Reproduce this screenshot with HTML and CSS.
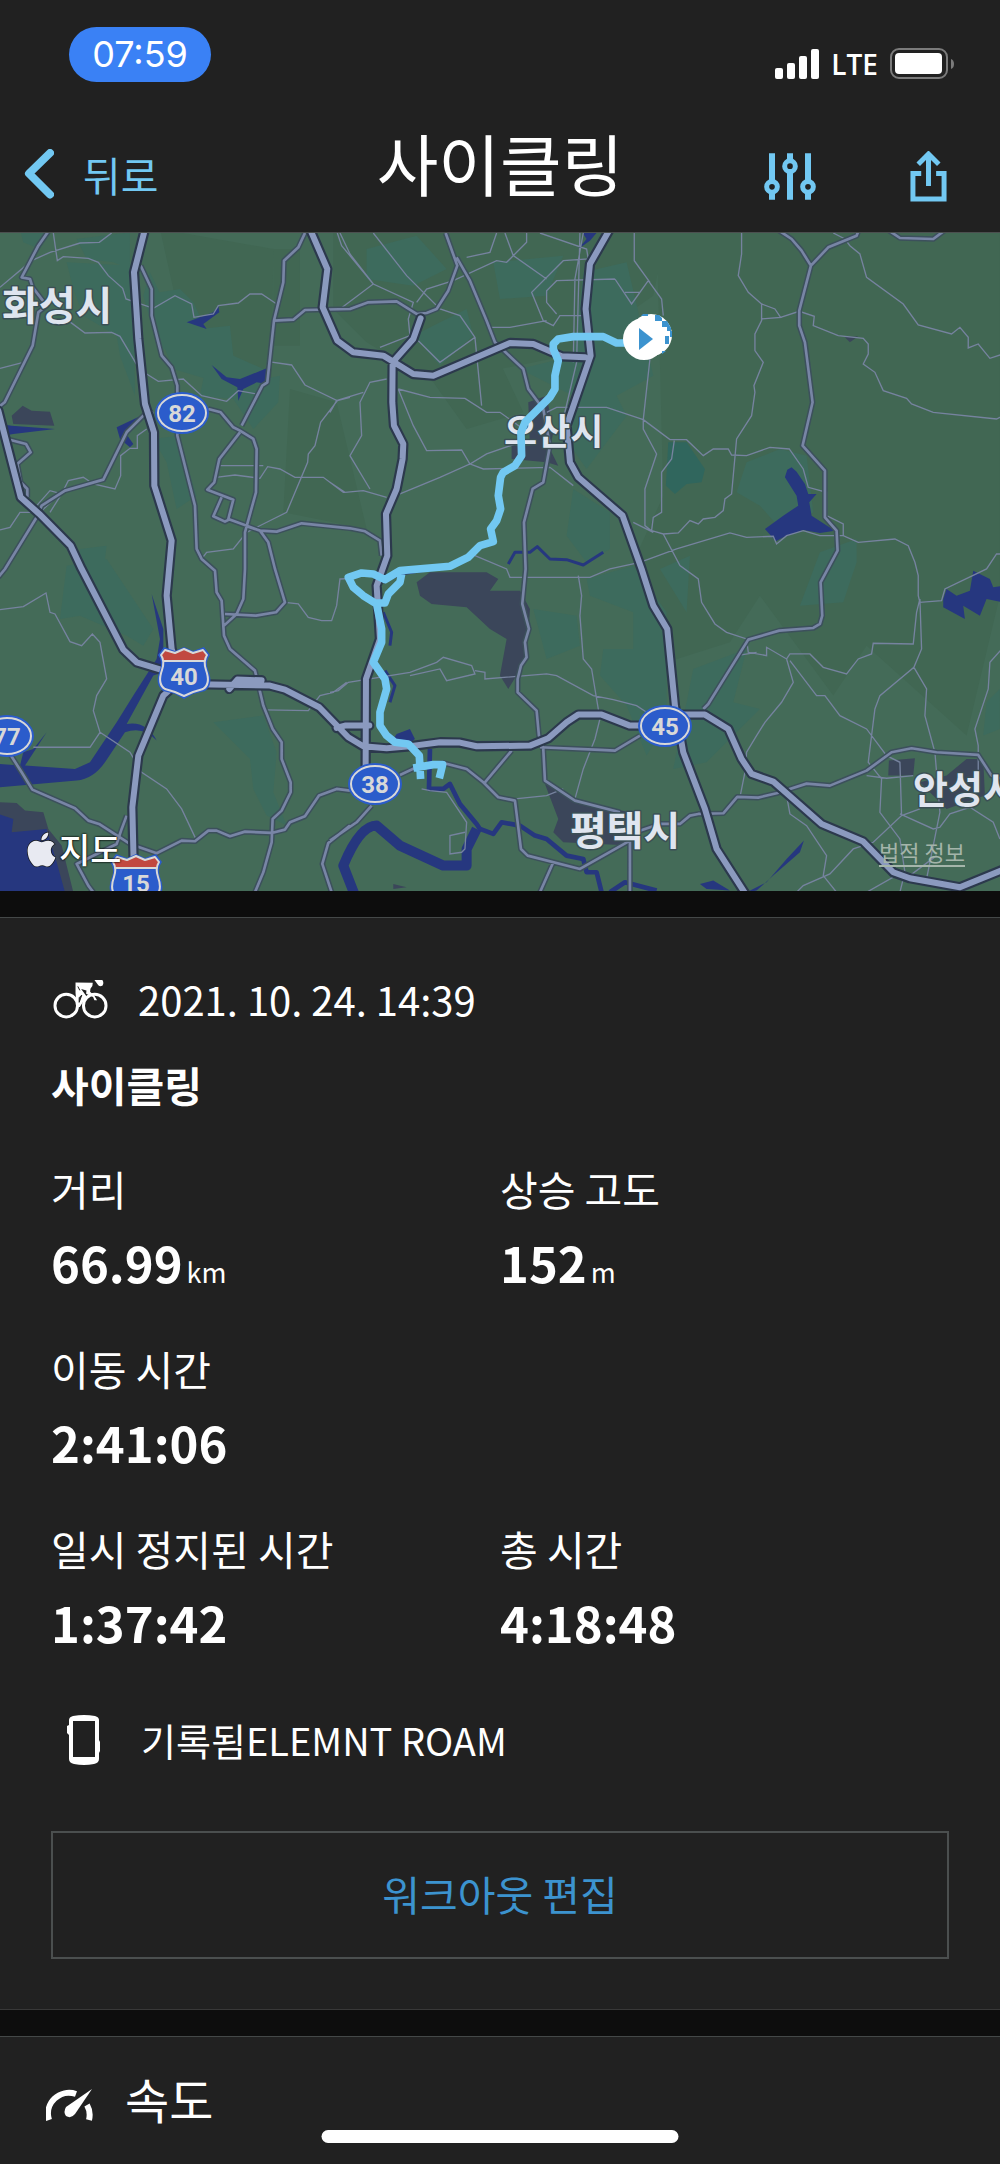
FILE: index.html
```html
<!DOCTYPE html>
<html lang="ko">
<head>
    <meta charset="utf-8">
    <meta name="viewport" content="width=device-width, initial-scale=1">
    <title>사이클링</title>
    <link rel="stylesheet" href="styles.css">
</head>
<body>
    <header class="header">
        <div class="status-bar">
            <span class="clock">07:59</span>
            <div class="status-icons">
                <svg class="signal" viewBox="0 0 44 30" aria-hidden="true">
                    <rect x="0" y="19" width="8" height="11" rx="2"/>
                    <rect x="12" y="14" width="8" height="16" rx="2"/>
                    <rect x="24" y="7" width="8" height="23" rx="2"/>
                    <rect x="36" y="0" width="8" height="30" rx="2"/>
                </svg>
                <span class="network">LTE</span>
                <svg class="battery" viewBox="0 0 64 32" aria-hidden="true">
                    <rect x="1" y="1" width="56" height="29" rx="8" fill="none" stroke="#7b7b7b" stroke-width="2"/>
                    <rect x="5" y="5" width="47" height="21" rx="4" fill="#fff"/>
                    <path d="M61 11q3 1 3 5t-3 5z" fill="#7b7b7b"/>
                </svg>
            </div>
        </div>
        <nav class="nav">
            <button class="back" type="button">
                <svg class="chevron" viewBox="0 0 30 50" aria-hidden="true">
                    <path d="M26 4L5 24.500L26 45.500" fill="none" stroke="currentColor" stroke-width="8" stroke-linecap="round" stroke-linejoin="round"/>
                </svg>
                <span>뒤로</span>
            </button>
            <h1>사이클링</h1>
            <div class="actions">
                <button class="icon-button" type="button" aria-label="설정">
                    <svg class="sliders" viewBox="0 0 156 140" fill="none" stroke="currentColor" aria-hidden="true">
                        <path d="M24 0V82M24 122V140M78 0V20M78 58V140M132 0V82M132 122V140" stroke-width="18"/>
                        <g stroke-width="15">
                            <circle cx="24" cy="101" r="16"/>
                            <circle cx="78" cy="39" r="16"/>
                            <circle cx="132" cy="101" r="16"/>
                        </g>
                    </svg>
                </button>
                <button class="icon-button" type="button" aria-label="공유">
                    <svg class="share" viewBox="0 0 110 154" fill="none" stroke="currentColor" stroke-width="15" aria-hidden="true">
                        <path d="M33 68H8V145H102V68H78M55 106V14M24 40L55 9L86 40"/>
                    </svg>
                </button>
            </div>
        </nav>
    </header>

    <main>
        <section class="map">
            <svg class="map-canvas" viewBox="0 0 1000 658" role="img" aria-label="지도">
                <defs>
                    <g id="oval">
                        <ellipse rx="27" ry="21" fill="#2b5ccb"/>
                        <ellipse rx="24" ry="18" fill="none" stroke="#d8d8d8" stroke-width="2"/>
                    </g>
                    <g id="shield" stroke-linejoin="round">
                        <path d="M0-26L-9-22L-20-26L-26-18Q-21-12-24-3Q-30 11-21 18L-9 21L0 26L9 21L21 18Q30 11 24-3Q21-12 26-18L20-26L9-22Z" fill="#2b5ccb"/>
                        <path d="M-22-12Q-21-16-23-18L-19-23L-9-20L0-24L9-20L19-23L23-18Q21-16 22-12Z" fill="#c14840"/>
                        <path d="M-21-12H21" stroke="#d8d8d8" stroke-width="2"/>
                        <path d="M0-24L-9-20L-19-23L-23-18Q-19-12-22-3Q-27 11-19 16L-9 19L0 23L9 19L19 16Q27 11 22-3Q19-12 23-18L19-23L9-20Z" fill="none" stroke="#d8d8d8" stroke-width="2"/>
                    </g>
                    <path id="highways" d="M435 0L402 130L415 330L435 525L462 610L463 770L515 935L500 1100L515 1260L545 1350L490 1400L415 1580L397 1735L403 1986
                        M-5 545L62 805L118 855L212 950L245 1020L370 1262L410 1300L475 1320L550 1345
                        M930 0L982 120L968 235L1012 335L1060 370L1150 380L1240 435L1300 440L1530 342L1600 345L1685 382L1755 385
                        M1262 268L1240 330L1178 400L1177 520L1182 590L1210 645L1208 690L1190 780L1158 855L1162 980L1130 1070L1140 1230L1098 1350L1097 1620
                        M1830 0L1770 105L1757 240L1772 380L1700 590L1710 700L1735 745L1868 860L1925 1020L1960 1130L2002 1200L2025 1430L2050 1570L2115 1740L2150 1860L2240 2000
                        M550 1365L810 1370L855 1382L958 1435L1045 1525L1090 1552L1160 1558L1220 1553L1320 1540L1380 1541L1430 1552L1590 1550L1645 1528L1700 1480L1735 1457L1805 1457L1890 1490L2000 1490L2040 1457L2115 1457L2185 1500L2225 1590L2255 1635L2320 1658L2465 1785L2590 1838L2680 1930L2730 1948L2880 1975L3010 1922
                        M1010 1497L1035 1490H1108M688 1380L712 1352L785 1354"/>
                    <path id="roads" d="M150 0L115 50L65 145L90 150L98 175L140 230L115 250L98 350L14 520L-5 535
                        M422 110L455 180V260L485 380L515 415L532 470V620L585 830L590 960L605 990L645 1025L650 1090L665 1115L672 1220L690 1260L765 1325L790 1430L818 1500L845 1540V1590L872 1660V1690L845 1745L818 1770L815 1840L790 1930L765 1990
                        M915 12L895 55L852 95L850 160L822 275L802 460L787 470L725 590
                        M822 275L880 272L915 243L1050 240L1105 220L1190 217L1250 255L1280 252L1310 240L1345 185L1372 110L1337 12M1370 85L1410 155L1460 275L1485 340L1570 420L1585 480L1630 540L1650 650L1630 760L1598 780L1572 880L1577 1020L1567 1125L1587 1200L1575 1240L1580 1285L1563 1310L1553 1350V1390L1610 1445L1617 1520L1630 1560L1635 1655L1725 1715L1860 1750
                        M460 550L430 560L380 610L310 752L195 785L125 830L110 865L15 1020L-5 1045
                        M625 540L662 550L700 595L720 605L760 630L770 660L768 790L735 910V1020L730 1110L710 1155L672 1190
                        M720 610L658 690L643 760L622 782L700 812L685 870L780 905L830 908L905 883L1050 898L1095 907L1140 935L1145 980
                        M665 805L640 862L675 878L690 870M735 890L780 905L805 940L825 1020L855 1120L828 1150L768 1160L675 1155
                        M20 630L78 645L92 670L52 705L62 760L82 780V805
                        M2330 0L2375 30L2405 65L2433 110L2398 245V290L2415 340L2438 520L2408 650L2475 725V865L2510 905L2513 965L2462 1060L2467 1160L2460 1185L2440 1197L2338 1205L2245 1232L2125 1425L2110 1440M2433 110L2485 55L2570 20L2578 0M2660 0L2700 27L2800 30L2840 0
                        M30 1575L65 1630L97 1682L225 1738L265 1775L297 1785L390 1845L470 1873L545 1835L585 1837L625 1805H650L690 1822L735 1808L815 1812L855 1802L870 1780L915 1762L957 1700L1010 1680L1050 1685
                        M380 1760L365 1800L350 1845L230 1905L265 1970L280 1990
                        M990 1835L1070 1780L1115 1730M1200 1638L1260 1610L1330 1602L1400 1620L1450 1660L1495 1705L1545 1715L1563 1860L1583 1880L1740 1920L1890 1835V1990M1535 1565L1455 1660M1660 1900L1620 1990M1620 1555L1800 1563L1845 1565L1920 1520
                        M1890 1815L1980 1785L2040 1785L2070 1760L2095 1755L2170 1753L2212 1704L2275 1706L2330 1693L2420 1664L2490 1670L2600 1625L2675 1570L2735 1558L2810 1570L2935 1578L2975 1640L3010 1650
                        M1050 1790L985 1842L967 1905L995 1990"/>
                </defs>

                <g transform="translate(0 -4) scale(.3333)">
                    <rect y="0" width="3010" height="2000" fill="#446b58"/>
                    <path d="M480 0L820 60L815 450L700 470L620 440L640 330L500 300L520 180ZM820 60H900V350H820ZM870 480L1010 520L1100 900L850 850ZM1000 0H2000L1960 200L1700 380L1300 460L1100 340L1000 240ZM1970 0H3000V1100L2900 1520L2600 1250L2500 1400L2280 1100L2190 1240L2000 1300L1900 1000L1990 800ZM1300 460L1500 400L1570 550L1400 600Z" fill="#416753"/>
                    <path d="M60 0H160L120 60L70 40ZM230 30L390 10V120L340 100L260 90ZM200 100L400 110L405 500L360 380L350 320L250 260L220 180ZM480 190L540 180L580 220L640 350L620 450L520 420L470 300ZM600 300L690 290L700 380L790 420V450L840 440L835 520L760 600L700 510L600 500L620 400ZM430 200L450 130L530 300L480 380ZM460 630L535 620L590 800L530 840L500 700ZM240 960L320 950L310 1030L240 1060ZM200 1010L320 990L460 1200L430 1250L380 1220L240 1160L180 1170Z
                        M1100 60L1250 20L1340 120L1240 170L1100 150ZM1480 100L1690 80L1640 200L1500 210ZM1240 320L1400 240L1420 320L1320 410ZM1560 420L1720 380L1750 130L1880 100L1960 440L1850 500L1880 560L1760 720L1690 620L1720 500ZM1720 780L1830 850V960L1760 1000L1700 920ZM1600 1140L1730 1160L1740 1250L1640 1290ZM1760 1050L1900 1010L2000 1150V1480L1940 1580L1880 1430L1800 1340L1810 1260H1900V1150L1770 1100Z
                        M2240 700L2340 660L2420 680L2440 850L2350 910L2280 830L2210 790ZM2460 970L2570 930V1000L2530 1120L2400 1130ZM1980 1020L2070 980L2060 1150ZM2080 1320L2240 1260L2200 1420L2280 1440L2120 1600L2020 1620ZM640 1480L790 1460L830 1570L820 1690L860 1790L800 1760L760 1680L750 1590ZM2960 1420L3000 1380V1500L2950 1520Z" fill="#3d6b5d"/>
                    <path d="M2005 640L2060 640L2115 720L2105 760L2060 765L2025 795L1998 770Z" fill="#30665d"/>
                    <path d="M35 560L68 530L95 545L150 548L163 590L40 585ZM1585 520L1640 500L1660 610L1650 660L1675 710L1640 700L1535 690V650H1590ZM1250 1060L1290 1030L1460 1030L1495 1050L1470 1085H1560L1590 1140L1580 1290L1525 1380L1500 1340L1520 1230L1470 1200L1400 1135L1295 1125L1260 1100ZM-5 1720L50 1722L75 1745L130 1750L145 1800L185 1850L220 1990H-5ZM1635 1665L1720 1715L1890 1750V1850L1690 1840L1660 1810L1675 1770ZM2667 1595L2745 1588L2740 1640L2665 1640ZM2840 1640L2900 1590H2950L2955 1700L2840 1740L2760 1660ZM2535 325L2575 322L2550 340ZM1180 1965L1220 1975L1180 1980Z" fill="#3b465a"/>
                    <g fill="#26377f">
                        <path d="M560 280L640 250L655 230L658 250L610 285L620 300ZM635 408L680 445L720 450L800 418V465L770 460L730 480L715 515L712 475L665 450ZM0 585L35 590L165 600L40 615L10 620ZM350 595L420 562L375 610L400 645L390 655L360 630ZM1740 0H1800L1770 35L1735 60L1760 30Z"/>
                        <path d="M455 1095L490 1200V1260L520 1320L460 1340L380 1485Q440 1475 470 1535Q430 1490 375 1510L315 1600Q280 1650 230 1655L0 1675V1605L60 1610L70 1570L100 1560L140 1510L75 1610L225 1620L270 1600L350 1480L400 1400L470 1290L480 1230ZM-5 1755L40 1770L35 1810L140 1800L170 1900L195 1990H-5Z"/>
                        <path d="M2295 900L2350 860L2395 830L2390 800L2355 745L2362 722L2375 715L2390 728L2415 765L2425 795H2450L2428 820L2435 860L2505 905L2460 912L2410 903L2350 925L2328 937ZM2830 1110L2840 1080L2870 1100L2910 1085L2920 1025L2970 1050L2980 1075L3010 1070V1120L2960 1110L2940 1160L2890 1130L2895 1170L2830 1135ZM2240 1990L2300 1960L2360 1890L2412 1835L2400 1870L2320 1940L2270 1985ZM2100 1965L2140 1955L2190 1985L2120 1980Z"/>
                        <path d="M1190 1515L1230 1500L1245 1530L1220 1550L1180 1530Z"/>
                    </g>
                    <g fill="none" stroke="#26377f" stroke-linejoin="round">
                        <path d="M1525 1005L1545 970H1590L1612 953L1650 990L1700 992L1750 1008L1810 970" stroke-width="9"/>
                        <path d="M1150 1060L1200 1035L1300 1020M1150 1150L1175 1210L1170 1250M1155 1325L1185 1370L1170 1420" stroke-width="9"/>
                        <path d="M1290 1560L1287 1680L1330 1680L1350 1665L1380 1725L1430 1785L1440 1800L1480 1815L1505 1780L1560 1790L1605 1820L1640 1830L1700 1880L1750 1890L1760 1930L1790 1930L1805 1990M1830 1990L1875 1960L1970 1985" stroke-width="14"/>
                        <path d="M1065 2000L1030 1910Q1080 1790 1130 1790L1200 1850L1330 1910L1400 1910L1400 1860L1430 1800" stroke-width="30"/>
                    </g>

                    <!-- small roads -->
                    <path class="lane" d="M0 175L95 95L150 70L240 42L298 40L335 12M160 12L172 95L190 83L265 88L295 100L325 140L368 178L378 210L460 238L525 200L575 225L582 265L640 255L655 230L715 222L750 195H785L830 225M205 275L255 312L335 310L360 322L412 410M440 435L475 457L550 450L605 500L680 517L715 485L770 495M0 418L70 400M805 398L875 408L915 468L1012 515L962 580L945 650L925 675L923 700L860 850L740 910L700 960L620 970L605 990M1012 515L1050 505M648 745L705 738L780 748L803 713L840 720L885 745H970L1030 790H1050M660 710H790M440 600L412 620V658H390L362 680V740L345 780L280 765L250 745L205 755L190 785L120 850H60L30 895L0 903M110 830L150 785L185 795L150 850
                        M1012 12L1025 50L1120 165L1060 210L1020 240M1020 12L1050 75L1120 165L1240 220L1225 270L1230 320L1140 355M1120 12L1220 140L1320 240L1380 260L1425 325L1320 400L1255 335M1490 12L1470 70L1400 85M1580 12V40L1520 100L1490 95L1360 155L1280 180L1250 220M1515 12L1540 80L1640 150M1740 12L1730 400L1690 570M1750 12L1725 150L1720 400M1620 12L1760 60L1765 90L1690 95L1595 190L1630 275L1660 290L1680 260H1750M1845 150L1670 155L1640 185V220L1670 255M1845 150L1895 225L1945 155L1985 210L1990 260M1903 12V95L1950 160M1875 190H1920M1470 295H1530L1640 275M1425 325L1445 530M1195 480L1290 505L1395 508L1460 550H1500L1570 600M1195 480L1240 590L1280 665L1385 663L1410 705L1460 675L1560 640M1200 795L1320 745L1410 705L1450 720L1650 715L1720 770M990 760L1035 790L1090 785L1160 805M1160 450L1110 460L1080 520L1085 620L1050 680L1110 780M990 550L1010 515L1090 490M1640 550L1670 535H1820L1930 572L1950 390M1930 572V600L1970 675L1935 780V890L1960 910L1900 880M1930 572L2010 632H2060L2110 680L2140 660H2185L2195 678L2240 680L2310 655L2368 660L2410 720L2425 775L2480 790L2480 860L2530 885L2530 920
                        M2023 635L2015 690L1985 730V850L1960 865L1955 905L1990 915L2035 912L2070 875L2095 885L2110 870L2145 865L2170 845L2175 810L2195 795L2210 630L2255 560L2265 490L2262 470L2290 400L2265 365V315L2285 275V225L2245 190L2215 140L2225 75V0M2285 225L2325 240L2342 265L2283 270M2342 265L2398 247L2443 262L2440 290L2515 320L2590 328L2605 345V375L2590 405L2625 430L2650 485L2720 508L2735 525L2800 550L2990 570L3010 560M2500 12L2535 30L2550 50L2580 75L2600 145L2710 225L2755 288L2855 315L2880 295L2905 325V357L2935 345L2970 388L3010 375
                        M0 1142L70 1133L138 1092L150 1150L165 1155L210 1238L245 1250L277 1215L300 1240L320 1350L290 1400L280 1445L300 1510L270 1555H100M300 1510L390 1570L425 1630L500 1680L545 1740L590 1835M855 1120L895 1125L925 1165L965 1175H995L1010 1130L1020 1050L1060 1048M990 1390L1015 1385L1045 1360L1230 1330L1310 1300L1330 1285L1415 1310L1425 1335L1340 1355L1320 1320L1230 1340M1425 1325L1455 1330V1350L1640 1335L1670 1340L1780 1400L1840 1412L1910 1430L1940 1450M795 1443L925 1445L960 1400L1000 1390L1040 1360
                        M1425 980L1520 1020L1530 1045L1770 1045L1830 1020L1920 1000L2030 960L2190 912L2240 925L2320 922L2330 945L2360 920L2410 905L2460 920L2530 920L2575 940L2685 930L2725 950L2745 1000L2755 1040V1100L2760 1120L2825 1115L2835 1080L2960 1020L2990 975H3010M1735 1040L1745 1100L1740 1160L1750 1290L1775 1320L1800 1470L1785 1530L1750 1620L1725 1710M1990 915L2040 1010L2095 1050L2105 1120L2145 1185L2180 1210L2240 1230L2245 1270L2300 1280L2300 1255L2360 1290L2370 1275H2430L2470 1315L2540 1335L2575 1290L2615 1275L2620 1243L2740 1245L2750 1150L2760 1110L2765 1260L2742 1315L2640 1400L2625 1440L2605 1600L2645 1650L2640 1750L2700 1830L2715 1930L2700 1990M2210 1280L2270 1270M2360 1290L2380 1360L2345 1420L2295 1480L2270 1520L2240 1570L2235 1630L2220 1705M2370 1295L2450 1400H2475L2520 1460L2600 1500L2660 1580L2700 1600L2705 1760M2742 1315L2780 1380L2775 1460L2805 1570L2820 1750L2780 1950M3010 1255L2970 1300L2965 1380L2925 1500L2935 1550V1640M2600 1640L2660 1648L2740 1640M2700 1755L2800 1800L2820 1795L2850 1755L2910 1735L2980 1780L3000 1830M2360 1700L2370 1755L2420 1790L2480 1880L2470 1940L2510 1990M2390 1990L2410 1970L2490 1935L2560 1860L2620 1840L2705 1760L2760 1740M2600 1990L2680 1945L2730 1940L2810 1880M1265 1680L1290 1685L1340 1690L1400 1780L1395 1860L1385 1870L1350 1875V1820L1395 1810M1545 1710L1640 1700L1690 1680"/>
                    <g class="road">
                        <use href="#roads" class="casing"/>
                        <use href="#roads" class="fill"/>
                    </g>
                    <g class="highway">
                        <use href="#highways" class="casing"/>
                        <use href="#highways" class="fill"/>
                    </g>
                </g>

                <g class="city">
                    <text x="2" y="87" font-size="40">화성시</text>
                    <text x="504" y="212" font-size="36">오산시</text>
                    <text x="570" y="612" font-size="40">평택시</text>
                    <text x="913" y="570" font-size="38">안성시</text>
                </g>

                <g class="sign">
                    <use href="#oval" x="182" y="180"/>
                    <text x="182" y="189">82</text>
                    <use href="#oval" x="7" y="503"/>
                    <text x="7" y="512">77</text>
                    <use href="#oval" x="375" y="551"/>
                    <text x="375" y="560">38</text>
                    <use href="#oval" x="665" y="493"/>
                    <text x="665" y="502">45</text>
                    <use href="#shield" x="184" y="440"/>
                    <text x="184" y="452">40</text>
                    <use href="#shield" x="136" y="647"/>
                    <text x="136" y="659">15</text>
                </g>

                <!-- recorded route -->
                <g class="route" transform="translate(0 -4) scale(.3333)">
                    <path d="M1880 342H1850L1810 323L1720 323L1675 330L1660 345V360L1675 395L1665 440V480L1650 505L1575 580L1563 610L1565 680L1545 710L1510 730L1502 745L1495 800L1502 840L1490 875L1472 900L1480 938L1440 950L1405 985L1350 1012L1200 1025L1155 1052L1120 1035L1085 1032L1045 1045L1060 1075L1090 1100L1130 1125L1145 1200V1240L1120 1300L1155 1350L1160 1380L1140 1450V1490L1160 1520L1185 1540L1225 1545L1258 1580L1262 1650M1130 1122L1155 1122L1165 1095L1200 1060L1205 1035M1240 1617L1300 1607H1328L1318 1648"/>
                </g>
                <g class="finish">
                    <circle cx="651" cy="102" r="21" fill="#fff"/>
                    <path d="M641 83h7v-2h-5zM670 98h2v6h-2zM662 118h4l-4 3z"/>
                    <circle cx="644" cy="106" r="21" fill="#fff"/>
                    <path d="M639 95L653 106L639 117Z"/>
                    <path d="M655 82h4l3 3v3h-7zM662 88h5l4 7v3h-4v-4h-5zM665 103h4v8h-4z"/>
                </g>
            </svg>
            <div class="map-brand">
                <svg viewBox="2 2 20 26" aria-hidden="true">
                    <path transform="translate(0 3)" d="M12.152 6.896c-.948 0-2.415-1.078-3.960-1.040-2.040.027-3.910 1.183-4.961 3.014-2.117 3.675-.546 9.103 1.519 12.090 1.013 1.454 2.208 3.090 3.792 3.039 1.520-.065 2.090-.987 3.935-.987 1.831 0 2.350.987 3.960.948 1.637-.026 2.676-1.480 3.676-2.948 1.156-1.688 1.636-3.325 1.662-3.415-.039-.013-3.182-1.221-3.220-4.857-.026-3.040 2.480-4.494 2.597-4.559-1.429-2.090-3.623-2.324-4.390-2.376-2-.156-3.675 1.090-4.610 1.090zM15.530 3.830c.843-1.012 1.400-2.427 1.245-3.830-1.207.052-2.662.805-3.532 1.818-.780.896-1.454 2.338-1.273 3.714 1.338.104 2.715-.688 3.559-1.701" fill="#e8eaf2" stroke="#15181c" stroke-width="1" paint-order="stroke"/>
                </svg>
                <span>지도</span>
            </div>
            <a class="legal" href="#legal">법적 정보</a>
        </section>

        <section class="card summary">
            <div class="date">
                <svg class="bike" viewBox="25 28 166 120" aria-hidden="true">
                    <g fill="none" stroke="#fff" stroke-width="9">
                        <circle cx="65" cy="108" r="34"/>
                        <circle cx="151" cy="108" r="34"/>
                    </g>
                    <path d="M93 38L145 39Q146 50 138 57L137 66L150 78L158 92L150 92L146 82L125 72L126 62L110 58L126 80L106 112L97 112L93 70ZM150 31H174Q180 40 174 48Q164 52 160 44Z" fill="#fff"/>
                    <path d="M100 50L106 62M104 84L112 76L104 98Z" stroke="#212121" stroke-width="3" fill="#212121"/>
                </svg>
                <time datetime="2021-10-24T14:39">2021. 10. 24. 14:39</time>
            </div>
            <h2>사이클링</h2>
            <dl class="stats">
                <div>
                    <dt>거리</dt>
                    <dd>66.99<small>km</small></dd>
                </div>
                <div>
                    <dt>상승 고도</dt>
                    <dd>152<small>m</small></dd>
                </div>
                <div class="wide">
                    <dt>이동 시간</dt>
                    <dd>2:41:06</dd>
                </div>
                <div>
                    <dt>일시 정지된 시간</dt>
                    <dd>1:37:42</dd>
                </div>
                <div>
                    <dt>총 시간</dt>
                    <dd>4:18:48</dd>
                </div>
            </dl>
            <div class="device">
                <svg viewBox="0 0 34 50" aria-hidden="true">
                    <path fill="#fff" fill-rule="evenodd" d="M2 5Q2 2 6 1Q17-1 28 1Q32 2 32 5V25L33 27V36L32 38V44Q32 48 27 49Q17 51 7 49Q2 48 2 44V20L0 18V11L2 10ZM6 6V42H28V6Z"/>
                </svg>
                <span>기록됨ELEMNT ROAM</span>
            </div>
            <button class="edit" type="button">워크아웃 편집</button>
        </section>

        <section class="card speed">
            <svg viewBox="0 0 47 33" aria-hidden="true">
                <path d="M3 32A21 21 0 0 1 30 6M41 17Q45 24 43 32" fill="none" stroke="#fff" stroke-width="6"/>
                <path d="M46 1L29 26Q25 31 20 28Q17 24 20 19Z" fill="#fff"/>
            </svg>
            <h3>속도</h3>
        </section>
    </main>
    <div class="home-indicator"></div>
</body>
</html>
```
FILE: styles.css
```css
* {
    box-sizing: border-box;
}
body {
    margin: 0;
    min-height: 100vh;
    position: relative;
    background: #212121;
    color: #fff;
    font-family: "Noto Sans CJK KR", sans-serif;
    font-feature-settings: "calt" 0, "locl" 0, "ccmp" 0;
}
button {
    border: 0;
    padding: 0;
    background: none;
    font: inherit;
    cursor: pointer;
}
h1, h2, h3, dl, dd {
    margin: 0;
    font-weight: normal;
}
svg {
    display: block;
}

/* header */
.header {
    border-bottom: 1px solid #4b4f4f;
}
.status-bar {
    display: flex;
    justify-content: space-between;
    align-items: flex-start;
    padding: 27px 46px 0 69px;
}
.clock {
    width: 142px;
    border-radius: 28px;
    background: #3a81f5;
    font: 36px/55px Inter, sans-serif;
    text-align: center;
}
.status-icons {
    display: flex;
    align-items: center;
    gap: 12px;
    margin-top: 21px;
}
.signal {
    width: 44px;
    height: 30px;
    fill: #fff;
}
.network {
    font: 600 28px/32px "Open Sans", sans-serif;
}
.battery {
    width: 64px;
    height: 32px;
}
.nav {
    display: grid;
    grid-template-columns: 1fr auto 1fr;
    align-items: center;
    height: 150px;
}
.back {
    display: flex;
    align-items: center;
    gap: 29px;
    margin: 34px 0 0 24px;
    color: #72c8f2;
    font-size: 41px;
    line-height: 46px;
}
.chevron {
    width: 30px;
    height: 50px;
}
h1 {
    font-size: 67px;
    line-height: 80px;
    margin-top: 10px;
}
.actions {
    display: flex;
    justify-content: flex-end;
    align-items: center;
    gap: 94px;
    margin: 38px 53px 0 0;
}
.icon-button {
    color: #72c8f2;
}
.sliders {
    width: 52px;
    height: 47px;
}
.share {
    width: 37px;
    height: 51px;
}

/* map */
.map {
    position: relative;
    overflow: hidden;
}
.map-canvas {
    width: 100%;
    height: auto;
}
.lane {
    fill: none;
    stroke: #76839f;
    stroke-width: 4;
}
.road, .highway {
    fill: none;
    stroke-linejoin: round;
}
.road .casing {
    stroke: #3c505c;
    stroke-width: 17;
}
.road .fill {
    stroke: #7885a5;
    stroke-width: 8;
}
.highway .casing {
    stroke: #2c394d;
    stroke-width: 31;
    stroke-linecap: round;
}
.highway .fill {
    stroke: #8b9abf;
    stroke-width: 18;
    stroke-linecap: round;
}
.city {
    font-weight: bold;
    fill: #dfe5ef;
    stroke: #3b4f55;
    stroke-width: 3;
    stroke-linejoin: round;
    paint-order: stroke;
}
.sign {
    font: bold 24px Roboto, sans-serif;
    fill: #d8d8d8;
    text-anchor: middle;
}
.route {
    fill: none;
    stroke: #72c8f2;
    stroke-width: 23;
    stroke-linejoin: round;
}
.finish {
    fill: #3c93cf;
}
.map-brand {
    position: absolute;
    left: 27px;
    bottom: 21px;
    display: flex;
    align-items: center;
    gap: 3px;
    font-size: 34px;
    font-weight: 500;
    line-height: 42px;
    text-shadow: 0 0 2px #000, 0 0 2px #000;
}
.map-brand svg {
    width: 29px;
    height: 37px;
}
.legal {
    position: absolute;
    right: 35px;
    bottom: 24px;
    border-bottom: 2px solid #a4b5aa;
    color: #a4b5aa;
    font-size: 22px;
    line-height: 28px;
    text-decoration: none;
}

/* cards */
.card {
    border-top: 1px solid #444848;
    background: #212121;
}
.summary {
    margin-top: 26px;
    padding: 49px 51px 50px;
    box-shadow: 0 -26px #0d0d0d, 0 26px #0d0d0d;
    border-bottom: 1px solid #383838;
}
.date {
    display: flex;
    align-items: center;
    gap: 30px;
    padding-left: 2px;
    font-size: 40px;
    line-height: 64px;
}
.bike {
    width: 55px;
    height: 40px;
}
h2 {
    margin: 21px 0 41px;
    font-size: 41px;
    font-weight: bold;
    line-height: 64px;
}
.stats {
    display: grid;
    grid-template-columns: 1fr 1fr;
    row-gap: 34px;
}
.wide {
    grid-column: 1 / -1;
}
dt {
    font-size: 41px;
    line-height: 62px;
}
dd {
    padding-top: 2px;
    font-size: 49px;
    font-weight: bold;
    line-height: 82px;
}
dd small {
    margin-left: 4px;
    font-size: 27px;
    font-weight: normal;
    line-height: 1;
}
.device {
    display: flex;
    align-items: center;
    gap: 40px;
    margin: 45px 0 59px;
    padding-left: 16px;
    font-size: 38px;
    line-height: 64px;
}
.device svg {
    width: 34px;
    height: 50px;
}
.edit {
    width: 100%;
    height: 128px;
    border: 2px solid #4b4f4f;
    padding-bottom: 4px;
    color: #3c93cf;
    font-size: 41px;
}
.speed {
    display: flex;
    align-items: center;
    gap: 32px;
    margin-top: 26px;
    padding: 24px 46px 27px;
}
.speed svg {
    width: 47px;
    height: 33px;
    margin-top: 12px;
}
h3 {
    font-size: 48px;
    line-height: 74px;
}
.home-indicator {
    position: absolute;
    bottom: 21px;
    left: 50%;
    width: 357px;
    height: 13px;
    border-radius: 7px;
    background: #fff;
    transform: translateX(-50%);
}
```
